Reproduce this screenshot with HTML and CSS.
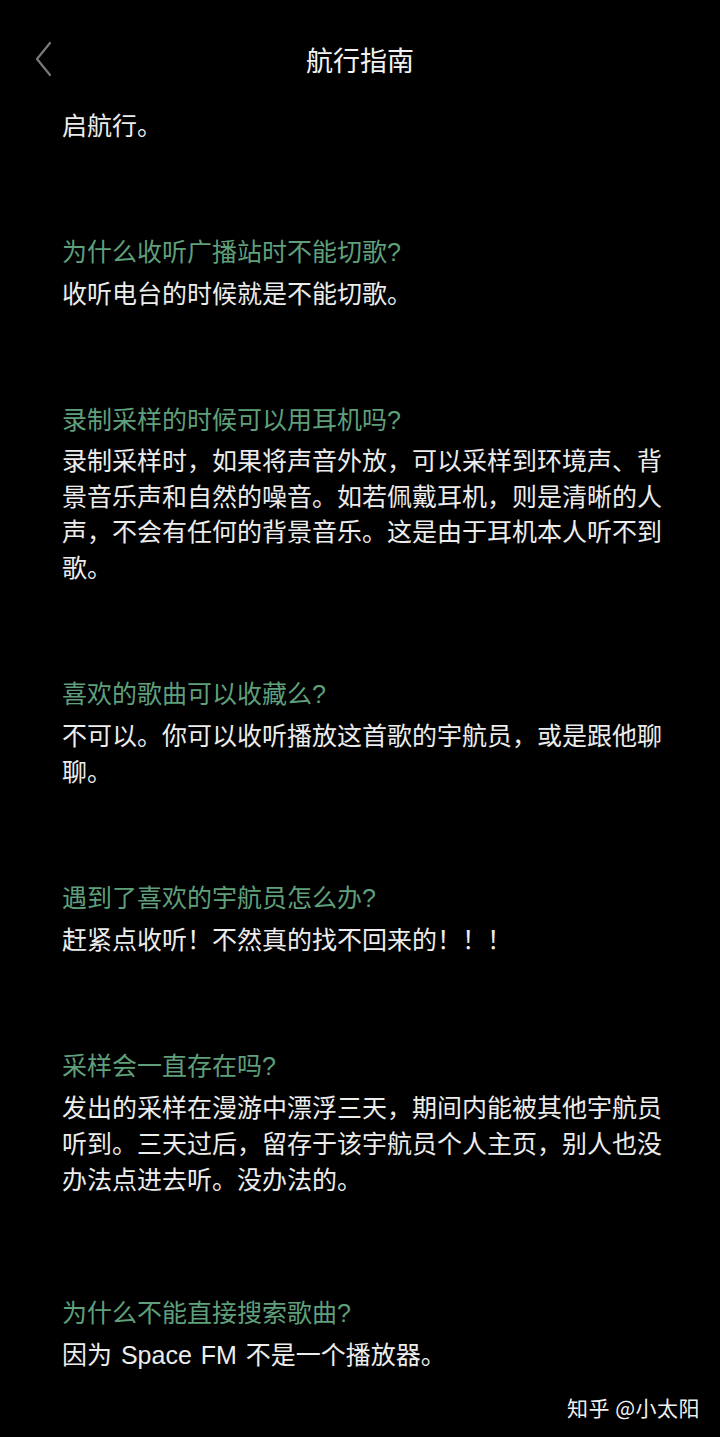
FILE: index.html
```html
<!DOCTYPE html>
<html lang="zh-CN">
<head>
<meta charset="utf-8">
<title>航行指南</title>
<link rel="stylesheet" href="styles.css">
</head>
<body>
<div class="page">
  <header class="header">
    <svg class="back" width="20" height="40" viewBox="0 0 20 40" aria-hidden="true">
      <polyline points="16,3 3,19 16,35" fill="none" stroke="#7a7a7a" stroke-width="2.2" stroke-linecap="round" stroke-linejoin="round"/>
    </svg>
    <h1 class="title">航行指南</h1>
  </header>
  <main class="content">
    <section class="item first">
      <p class="a">启航行。</p>
    </section>
    <section class="item">
      <p class="q">为什么收听广播站时不能切歌?</p>
      <p class="a">收听电台的时候就是不能切歌。</p>
    </section>
    <section class="item">
      <p class="q">录制采样的时候可以用耳机吗?</p>
      <p class="a tight">录制采样时，如果将声音外放，可以采样到环境声、背景音乐声和自然的噪音。如若佩戴耳机，则是清晰的人声，不会有任何的背景音乐。这是由于耳机本人听不到歌。</p>
    </section>
    <section class="item">
      <p class="q">喜欢的歌曲可以收藏么?</p>
      <p class="a">不可以。你可以收听播放这首歌的宇航员，或是跟他聊聊。</p>
    </section>
    <section class="item">
      <p class="q">遇到了喜欢的宇航员怎么办?</p>
      <p class="a">赶紧点收听！不然真的找不回来的！！！</p>
    </section>
    <section class="item">
      <p class="q">采样会一直存在吗?</p>
      <p class="a">发出的采样在漫游中漂浮三天，期间内能被其他宇航员听到。三天过后，留存于该宇航员个人主页，别人也没办法点进去听。没办法的。</p>
    </section>
    <section class="item last">
      <p class="q">为什么不能直接搜索歌曲?</p>
      <p class="a latin">因为 Space FM 不是一个播放器。</p>
    </section>
  </main>
  <div class="watermark">知乎 @小太阳</div>
</div>
</body>
</html>
```
FILE: styles.css
```css
* { box-sizing: border-box; }
html, body {
  margin: 0;
  padding: 0;
  background: #000;
}
body {
  font-family: "Liberation Sans", "Noto Sans CJK SC", sans-serif;
  color: #ececec;
}
.page {
  position: relative;
  width: 720px;
  height: 1437px;
  overflow: hidden;
  background: #000;
}
.header {
  position: relative;
  height: 108px;
  display: flex;
  justify-content: center;
  padding-top: 41px;
}
.back {
  position: absolute;
  left: 34px;
  top: 40px;
}
.title {
  margin: 0;
  font-family: "Noto Sans CJK SC", sans-serif;
  font-weight: 400;
  font-size: 27px;
  line-height: 38px;
  color: #f2f2f2;
}
.content {
  padding-left: 62px;
  width: 672px;
}
.item {
  margin-top: 90px;
}
.item.first {
  margin-top: 0;
}
.item.last {
  margin-top: 97px;
}
.q, .a {
  margin: 0;
  font-size: 25px;
  line-height: 36px;
}
.q {
  color: #5f9f7b;
  margin-bottom: 6px;
}
.a {
  color: #ececec;
}
.a.tight {
  line-height: 35.5px;
}
.a.latin {
  word-spacing: 2px;
}
.watermark {
  position: absolute;
  right: 20px;
  top: 1392px;
  font-family: "Noto Sans CJK SC", sans-serif;
  font-size: 21px;
  line-height: 30px;
  color: #f0f0f0;
  letter-spacing: 0.5px;
}
```
